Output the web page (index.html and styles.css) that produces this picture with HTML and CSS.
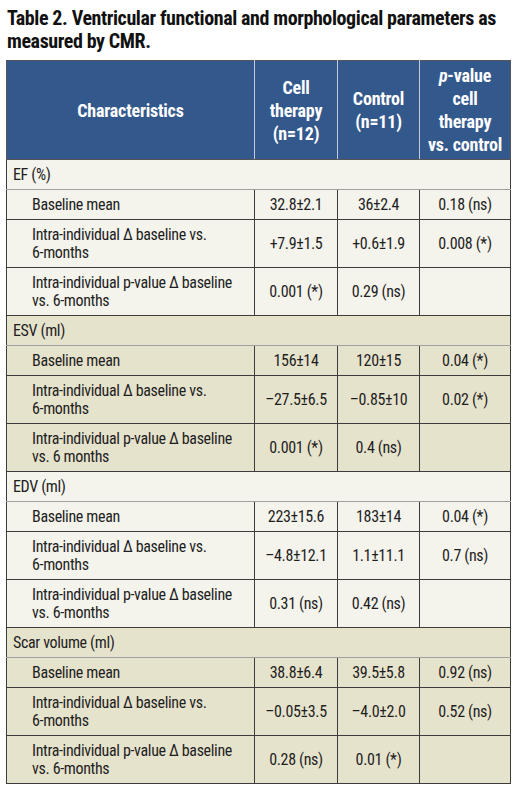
FILE: index.html
```html
<!DOCTYPE html>
<html>
<head>
<meta charset="utf-8">
<link rel="stylesheet" href="styles.css">
</head>
<body>
<h1 class="title">Table 2. Ventricular functional and morphological parameters as measured by CMR.</h1>
<table class="data">
  <colgroup>
    <col class="c1"><col class="c2"><col class="c3"><col class="c4">
  </colgroup>
  <thead>
    <tr>
      <th>Characteristics</th>
      <th>Cell<br>therapy<br>(n=12)</th>
      <th>Control<br>(n=11)</th>
      <th><i>p</i>-value<br>cell<br>therapy<br>vs. control</th>
    </tr>
  </thead>
  <tbody class="light">
    <tr class="sec"><td colspan="4">EF (%)</td></tr>
    <tr class="one"><td class="lab">Baseline mean</td><td>32.8±2.1</td><td>36±2.4</td><td>0.18 (ns)</td></tr>
    <tr class="two"><td class="lab">Intra-individual Δ baseline vs.<br>6-months</td><td>+7.9±1.5</td><td>+0.6±1.9</td><td>0.008 (*)</td></tr>
    <tr class="two"><td class="lab">Intra-individual p-value Δ baseline<br>vs. 6-months</td><td>0.001 (*)</td><td>0.29 (ns)</td><td></td></tr>
  </tbody>
  <tbody class="dark">
    <tr class="sec"><td colspan="4">ESV (ml)</td></tr>
    <tr class="one"><td class="lab">Baseline mean</td><td>156±14</td><td>120±15</td><td>0.04 (*)</td></tr>
    <tr class="two"><td class="lab">Intra-individual Δ baseline vs.<br>6-months</td><td>–27.5±6.5</td><td>–0.85±10</td><td>0.02 (*)</td></tr>
    <tr class="two"><td class="lab">Intra-individual p-value Δ baseline<br>vs. 6 months</td><td>0.001 (*)</td><td>0.4 (ns)</td><td></td></tr>
  </tbody>
  <tbody class="light">
    <tr class="sec"><td colspan="4">EDV (ml)</td></tr>
    <tr class="one"><td class="lab">Baseline mean</td><td>223±15.6</td><td>183±14</td><td>0.04 (*)</td></tr>
    <tr class="two"><td class="lab">Intra-individual Δ baseline vs.<br>6-months</td><td>–4.8±12.1</td><td>1.1±11.1</td><td>0.7 (ns)</td></tr>
    <tr class="two"><td class="lab">Intra-individual p-value Δ baseline<br>vs. 6-months</td><td>0.31 (ns)</td><td>0.42 (ns)</td><td></td></tr>
  </tbody>
  <tbody class="dark">
    <tr class="sec"><td colspan="4">Scar volume (ml)</td></tr>
    <tr class="one"><td class="lab">Baseline mean</td><td>38.8±6.4</td><td>39.5±5.8</td><td>0.92 (ns)</td></tr>
    <tr class="two"><td class="lab">Intra-individual Δ baseline vs.<br>6-months</td><td>–0.05±3.5</td><td>–4.0±2.0</td><td>0.52 (ns)</td></tr>
    <tr class="two"><td class="lab">Intra-individual p-value Δ baseline<br>vs. 6-months</td><td>0.28 (ns)</td><td>0.01 (*)</td><td></td></tr>
  </tbody>
</table>
</body>
</html>
```

FILE: styles.css
```css
html, body {
  margin: 0;
  padding: 0;
  background: #ffffff;
}
body {
  padding: 0 8px 0 6px;
  font-family: Roboto, "Liberation Sans", sans-serif;
  font-stretch: 75%;
  color: #1e1e1e;
}
.title {
  margin: 0;
  padding: 7px 0 7px 1px;
  font-size: 20px;
  line-height: 23px;
  font-weight: bold;
  letter-spacing: -0.4px;
  color: #111;
  width: 500px;
}
.data {
  border-collapse: collapse;
  width: 504px;
  table-layout: fixed;
  border: 1px solid #555;
  font-size: 16px;
  letter-spacing: -0.35px;
}
.c1 { width: 248px; }
.c2 { width: 83px; }
.c3 { width: 82px; }
.c4 { width: 91px; }
.data thead th {
  background: #33588b;
  color: #ffffff;
  font-weight: bold;
  font-size: 18px;
  letter-spacing: -0.2px;
  line-height: 23px;
  height: 98px;
  padding: 0;
  text-align: center;
  vertical-align: middle;
  border-left: 1px solid #c2cadb;
  border-bottom: 1px solid #555;
}
.data thead th:first-child { border-left: none; }
.data td {
  padding: 0;
  text-align: center;
  vertical-align: middle;
  line-height: 18px;
  border: 1px solid #3c3c3c;
}
.light td { background: #f4f3ec; }
.dark td { background: #e6e3cd; }
.data .sec td {
  text-align: left;
  height: 29px;
  padding-left: 6px;
  border-top: 1px solid #a0a0a0;
  border-bottom: 1px solid #a0a0a0;
}
.data td.lab {
  text-align: left;
  padding-left: 25px;
}
.one td { height: 29px; }
.two td { height: 47px; }
```
